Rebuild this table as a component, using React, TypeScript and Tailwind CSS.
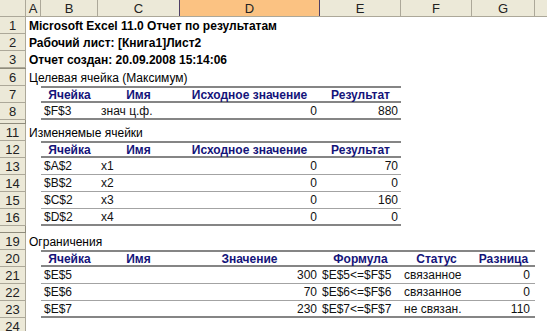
import type { ReactNode } from 'react';

// column widths for A..G, the rest of the page is H
const colW = ['w-[15px]', 'w-[57px]', 'w-[81px]', 'w-[141px]', 'w-[81px]', 'w-[71px]', 'w-[63px]'];
const letters = ['A', 'B', 'C', 'D', 'E', 'F', 'G'];

const thick = 'border-[#858585]';
const thin = 'border-[#a3a3a3]';

type Kind = 'head' | 'data' | 'last';

function RowHead({ n }: { n: string }) {
  return (
    <div className="w-[26px] shrink-0 bg-[#ece9d8] border-r border-b border-[#aca899] flex items-center justify-center text-[13px] text-[#222] leading-none">
      {n}
    </div>
  );
}

function Row({ n, children }: { n: string; children?: ReactNode }) {
  return (
    <div className="flex h-[17px]">
      <RowHead n={n} />
      <div className="flex flex-1 min-w-0 bg-white">{children}</div>
    </div>
  );
}

// collapsed rows (4-5, 9-10, 17-18) show only as a thin strip in the header
function Hidden({ h }: { h: string }) {
  return (
    <div className={`flex ${h}`}>
      <div className="w-[26px] shrink-0 bg-[#ece9d8] border-r border-b border-[#8f8c7c]" />
      <div className="flex-1 bg-white" />
    </div>
  );
}

function TextRow({ n, text, bold }: { n: string; text?: string; bold?: boolean }) {
  return (
    <Row n={n}>
      <div className={`pl-[3px] whitespace-nowrap flex items-center text-[12px] ${bold ? 'font-bold' : ''}`}>
        {text}
      </div>
    </Row>
  );
}

type CellDef = { t?: string; a?: 'l' | 'r' | 'c'; pad?: string };

function TableRow({ n, kind, cells }: { n: string; kind: Kind; cells: CellDef[] }) {
  const line =
    kind === 'head'
      ? `border-t-2 border-b-2 ${thick}`
      : kind === 'last'
        ? `border-b-2 ${thick}`
        : `border-b ${thin}`;
  return (
    <Row n={n}>
      <div className={`${colW[0]} shrink-0`} />
      {cells.map((c, i) => (
        <div
          key={i}
          className={`${colW[i + 1]} shrink-0 flex items-center whitespace-nowrap text-[12px] ${line} ${
            c.a === 'r' ? 'justify-end' : c.a === 'c' ? 'justify-center' : 'justify-start'
          } ${c.pad ?? (c.a === 'r' ? 'pr-[3px]' : 'pl-[3px]')} ${
            kind === 'head' ? 'font-bold text-[#14147a]' : 'text-[#111]'
          }`}
        >
          {c.t}
        </div>
      ))}
    </Row>
  );
}

export default function App() {
  return (
    <div className="w-[547px] h-[331px] overflow-hidden bg-white font-['Liberation_Sans',Arial,sans-serif] text-black">
      {/* column header */}
      <div className="flex h-[17px] bg-[#ece9d8] border-b border-[#aca899]">
        <div className="w-[26px] shrink-0 border-r border-[#aca899]" />
        {letters.map((l, i) => (
          <div
            key={l}
            className={`${colW[i]} shrink-0 flex items-center justify-center text-[13px] text-[#222] leading-none ${
              l === 'D'
                ? 'bg-[#fbc282] border-r border-l border-[#4e3f66]'
                : l === 'C'
                  ? ''
                  : 'border-r border-[#aca899]'
            }`}
          >
            {l}
          </div>
        ))}
        <div className="flex-1" />
      </div>

      <TextRow n="1" bold text="Microsoft Excel 11.0 Отчет по результатам" />
      <TextRow n="2" bold text="Рабочий лист: [Книга1]Лист2" />
      <TextRow n="3" bold text="Отчет создан: 20.09.2008 15:14:06" />
      <Hidden h="h-[1px]" />
      <TextRow n="6" text="Целевая ячейка (Максимум)" />
      <TableRow
        n="7"
        kind="head"
        cells={[
          { t: 'Ячейка', a: 'c', pad: '' },
          { t: 'Имя', a: 'c', pad: '' },
          { t: 'Исходное значение', a: 'c', pad: '' },
          { t: 'Результат', a: 'c', pad: '' },
        ]}
      />
      <TableRow
        n="8"
        kind="last"
        cells={[{ t: '$F$3' }, { t: 'знач ц.ф.' }, { t: '0', a: 'r' }, { t: '880', a: 'r' }]}
      />
      <Hidden h="h-[4px]" />
      <TextRow n="11" text="Изменяемые ячейки" />
      <TableRow
        n="12"
        kind="head"
        cells={[
          { t: 'Ячейка', a: 'c', pad: '' },
          { t: 'Имя', a: 'c', pad: '' },
          { t: 'Исходное значение', a: 'c', pad: '' },
          { t: 'Результат', a: 'c', pad: '' },
        ]}
      />
      {[
        ['13', '$A$2', 'x1', '0', '70'],
        ['14', '$B$2', 'x2', '0', '0'],
        ['15', '$C$2', 'x3', '0', '160'],
        ['16', '$D$2', 'x4', '0', '0'],
      ].map(([n, c, name, v0, r], i) => (
        <TableRow
          key={n}
          n={n}
          kind={i === 3 ? 'last' : 'data'}
          cells={[{ t: c }, { t: name }, { t: v0, a: 'r' }, { t: r, a: 'r' }]}
        />
      ))}
      <Hidden h="h-[7px]" />
      <TextRow n="19" text="Ограничения" />
      <TableRow
        n="20"
        kind="head"
        cells={[
          { t: 'Ячейка', a: 'c', pad: '' },
          { t: 'Имя', a: 'c', pad: '' },
          { t: 'Значение', a: 'c', pad: '' },
          { t: 'Формула', a: 'c', pad: '' },
          { t: 'Статус', a: 'c', pad: '' },
          { t: 'Разница', a: 'c', pad: '' },
        ]}
      />
      {[
        ['21', '$E$5', '300', '$E$5<=$F$5', 'связанное', '0'],
        ['22', '$E$6', '70', '$E$6<=$F$6', 'связанное', '0'],
        ['23', '$E$7', '230', '$E$7<=$F$7', 'не связан.', '110'],
      ].map(([n, c, v, f, s, d], i) => (
        <TableRow
          key={n}
          n={n}
          kind={i === 2 ? 'last' : 'data'}
          cells={[
            { t: c },
            { t: '' },
            { t: v, a: 'r' },
            { t: f, pad: 'pl-[2px]' },
            { t: s },
            { t: d, a: 'r', pad: 'pr-[5px]' },
          ]}
        />
      ))}
      <TextRow n="24" />
    </div>
  );
}
